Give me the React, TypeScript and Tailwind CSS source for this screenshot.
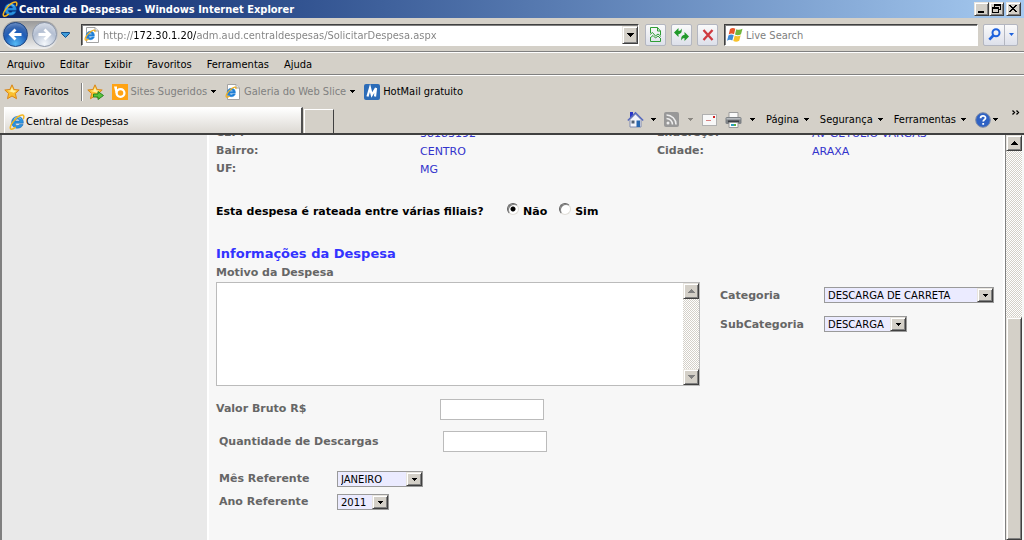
import type { ReactNode } from 'react'

const menu = ['Arquivo', 'Editar', 'Exibir', 'Favoritos', 'Ferramentas', 'Ajuda']

const dados = [
    ['CEP:', '38183192', 'Endereço:', 'AV GETULIO VARGAS'],
    ['Bairro:', 'CENTRO', 'Cidade:', 'ARAXA'],
    ['UF:', 'MG', '', ''],
]

const raised = 'bg-[#d4d0c8] border border-t-[#e9e6e0] border-l-[#e9e6e0] border-r-[#404040] border-b-[#404040] shadow-[inset_1px_1px_0_#fff,inset_-1px_-1px_0_#808080]'
const dither = 'bg-[repeating-conic-gradient(#fff_0_25%,#d4d0c8_0_50%)] bg-size-[2px_2px]'

function Seta({ className = 'text-black' }: { className?: string }) {
    return (
        <svg width="5" height="3" viewBox="0 0 5 3" shapeRendering="crispEdges" className={`mx-px shrink-0 ${className}`}>
            <path d="M0 0h5v1H4v1H3v1H2V2H1V1H0z" fill="currentColor" />
        </svg>
    )
}

function SetaRolagem({ up, className = 'text-black' }: { up?: boolean; className?: string }) {
    return (
        <svg width="7" height="4" viewBox="0 0 7 4" shapeRendering="crispEdges" className={className}>
            <path d={up ? 'M3 0h1v1h1v1h1v1h1v1H0V3h1V2h1V1h1z' : 'M0 0h7v1H6v1H5v1H4v1H3V3H2V2H1V1H0z'} fill="currentColor" />
        </svg>
    )
}

function IconeIE() {
    return (
        <svg width="16" height="16" viewBox="0 0 16 16" className="shrink-0">
            <path d="M8.400 2.400a5.800 5.800 0 0 0-5.800 5.800c0 3.500 2.500 6 5.900 6 2.700 0 4.800-1.400 5.600-3.700h-3.500c-.5.7-1.200 1-2.100 1-1.400 0-2.300-.9-2.400-2.300h8.200c.4-4.200-2.200-6.800-5.900-6.800zM6.100 7c.3-1.200 1.100-1.900 2.300-1.900s2.100.7 2.300 1.900z" fill="#2a93e0" stroke="#0f5fb0" strokeWidth=".5" />
            <path d="M5 5.200c.9-1.200 2-1.700 3.400-1.700 1.600 0 2.800.6 3.600 1.700" fill="none" stroke="#8fd4fa" strokeWidth=".9" />
            <path d="M14.500 4.600c.6-2 .5-3.600-.9-3.700C11.200.7 6.900 4 4 7.900 1.500 11.200.5 14.300 1.900 15c1 .5 2.800-.4 4.300-1.600" fill="none" stroke="#f3b61f" strokeWidth="1.500" strokeLinecap="round" />
        </svg>
    )
}

function PaginaIE() {
    return (
        <svg width="16" height="16" viewBox="0 0 16 16" className="shrink-0">
            <path d="M2.500.5h8.500l3.500 3.500v11.500h-12z" fill="#fff" stroke="#a3a3a3" />
            <path d="M11 .5V4h3.500" fill="#e8e8e8" stroke="#a3a3a3" />
            <path d="M6.300 4.300a4 4 0 0 0-4.100 4.200c0 2.500 1.700 4.200 4.200 4.200 1.900 0 3.400-1 3.900-2.600H7.900c-.3.4-.8.6-1.400.6-1 0-1.600-.6-1.700-1.500h5.600c.3-3-1.400-4.900-4.100-4.900zM4.800 7.500c.2-.8.7-1.200 1.500-1.200s1.400.4 1.500 1.200z" fill="#1f7fd6" stroke="#1f7fd6" strokeWidth=".5" />
            <path d="M10.800 5.200c.4-1.400 0-2.100-1-2C7.700 3.400 3.500 6.800 1.800 9.900c-1.100 2-.9 3.400.3 3.300.8 0 1.800-.5 2.600-1.100" fill="none" stroke="#f0b020" strokeWidth="1.200" />
        </svg>
    )
}

function Estrela({ add = false }: { add?: boolean }) {
    return (
        <svg width="17" height="16" viewBox="0 0 17 16" className="shrink-0">
            <path d="M8 .8l2.100 4.700 5.100.5-3.800 3.500 1.100 5.200L8 12l-4.500 2.700 1.100-5.200L.8 6l5.100-.5z" fill="#fbc02f" stroke="#d9861a" strokeWidth="1" strokeLinejoin="round" />
            <path d="M8 3l1.200 3.300 3.300.4-2.700 2L8 8.300 3.500 6.800l3-.4z" fill="#fff0a0" />
            {add && <path d="M6.500 10h4.500V7.500l5.500 4-5.500 4V13H6.500z" fill="#59c43c" stroke="#1d7f1b" strokeWidth=".9" />}
        </svg>
    )
}

function BotaoBarra({ label, children }: { label: string; children: ReactNode }) {
    return (
        <button aria-label={label} className="flex h-[22px] w-[21px] shrink-0 items-center justify-center rounded-xs border border-[#b3b6c0] bg-linear-to-b from-[#fafafa] to-[#dde0ea]">
            {children}
        </button>
    )
}

function BotaoJanela({ label, children }: { label: string; children: ReactNode }) {
    return (
        <button aria-label={label} className={`flex h-[14px] w-[15px] items-center justify-center ${raised}`}>
            <svg width="11" height="10" viewBox="0 0 11 10" shapeRendering="crispEdges" className="shrink-0">{children}</svg>
        </button>
    )
}

function Combo({ id, value, className }: { id: string; value: string; className: string }) {
    return (
        <div className={`relative h-4 ${className}`}>
            <select id={id} defaultValue={value} className="block h-4 w-full appearance-none border border-[#9a9a9a] bg-[#ebebff] pt-px pl-[3px] text-[10px] leading-[13px] font-normal text-black">
                <option>{value}</option>
            </select>
            <span className={`pointer-events-none absolute top-px right-px flex h-[14px] w-4 items-center justify-center ${raised}`}>
                <Seta />
            </span>
        </div>
    )
}

function Radio({ label, checked }: { label: string; checked?: boolean }) {
    return (
        <label className="flex items-center gap-1">
            <input
                type="radio"
                name="rateada"
                defaultChecked={checked}
                className="mb-[6px] size-3 appearance-none rounded-full border border-t-[#606060] border-l-[#606060] border-r-[#e0ded8] border-b-[#e0ded8] bg-white shadow-[inset_1px_1px_0_#808080] checked:bg-[radial-gradient(circle,#000_2px,#fff_3px)]"
            />
            {label}
        </label>
    )
}

function Cabecalho() {
    return (
        <header className="shrink-0 bg-[#d4d0c8]">
            {/* barra de titulo */}
            <div className="flex h-[18px] items-center bg-linear-to-r from-[#0a246a] to-[#a6caf0] pr-[3px] pl-[2px]">
                <IconeIE />
                <h1 className="ml-px flex-1 pt-px text-[11px] font-bold text-white">Central de Despesas - Windows Internet Explorer</h1>
                <BotaoJanela label="Minimizar"><path d="M2 7h6v2H2z" /></BotaoJanela>
                <BotaoJanela label="Restaurar"><path d="M3 0h7v6H8V5h1V2H4v1H3zM1 3h7v6H1zm1 2v3h5V5z" fillRule="evenodd" /></BotaoJanela>
                <span className="w-[2px]" />
                <BotaoJanela label="Fechar"><path d="M1 1h2v1h1v1h2V2h1V1h2v1H8v1H7v1H6v1h1v1h1v1h1v1H7V7H6V6H4v1H3v1H1V7h1V6h1V5h1V4H3V3H2V2H1z" /></BotaoJanela>
            </div>

            {/* navegacao */}
            <div className="flex h-[34px] items-center border-b border-[#808080] pr-[6px] pl-[2px]">
                <div className="flex h-7 w-[56px] shrink-0 items-center justify-between rounded-full bg-linear-to-b from-[#9a9a9a] to-[#efefef] px-px">
                    <button aria-label="Voltar" className="flex size-[25px] items-center justify-center rounded-full border border-[#1c4380] bg-[radial-gradient(circle_at_50%_90%,#55b9f5,#1e5cb8_50%,#3a68b0_70%,#8aa6d4)]">
                        <svg width="17" height="17" viewBox="0 0 17 17"><path d="M14.500 8.500H4M8.500 3.500l-5 5 5 5" fill="none" stroke="#fff" strokeWidth="2.800" /></svg>
                    </button>
                    <button aria-label="Avançar" className="flex size-[25px] items-center justify-center rounded-full border border-[#8d98ab] bg-[radial-gradient(circle_at_50%_90%,#f4f8fc,#b4bfd2_55%,#e4e8ef)]">
                        <svg width="17" height="17" viewBox="0 0 17 17"><path d="M2.500 8.500H13M8.500 3.500l5 5-5 5" fill="none" stroke="#fff" strokeWidth="2.800" /></svg>
                    </button>
                </div>
                <button aria-label="Páginas recentes" className="mr-[11px] ml-[3px]">
                    <svg width="9" height="6" viewBox="0 0 9 6"><path d="M.5.5h8v1l-4 4-4-4z" fill="#3f9bd8" stroke="#134f8c" /></svg>
                </button>
                <div className="flex h-[22px] flex-1 items-center border border-t-[#404040] border-l-[#404040] border-r-white border-b-white bg-white pl-[2px] shadow-[inset_1px_1px_0_#808080]">
                    <PaginaIE />
                    <input
                        aria-label="Endereço"
                        defaultValue="http://172.30.1.20/adm.aud.centraldespesas/SolicitarDespesa.aspx"
                        className="ml-[3px] h-[18px] min-w-0 flex-1 bg-[linear-gradient(90deg,#808080_31px,#000_31px,#000_93px,#808080_93px)] bg-clip-text pt-[2px] text-[11px] text-transparent outline-none"
                    />
                    <button aria-label="Histórico" className={`flex h-[18px] w-4 items-center justify-center ${raised}`}><SetaRolagem /></button>
                </div>
                <div className="mx-[6px] flex gap-[5px]">
                    <BotaoBarra label="Modo de compatibilidade">
                        <svg width="13" height="15" viewBox="0 0 13 15" fill="none" stroke="#2f9e35">
                            <path d="M1.500 6V.5h7L11.500 4v4M8.500.5V4h3M1.500 10.500v4h10v-3" />
                            <path d="M1 7.500l2.500-2 3 3.500 2.500-2 3 2.500M1 11l3-2.500 2.500 2.500L9 9l3 3" />
                        </svg>
                    </BotaoBarra>
                    <BotaoBarra label="Atualizar">
                        <svg width="15" height="13" viewBox="0 0 15 13" fill="#219a2b">
                            <path d="M0 4.500L4.500 0v3c1.500 0 2.500-.8 3-2.500.8 3-.2 5.500-3 5.500v3z" />
                            <path d="M15 8.500L10.500 13v-3c-1.500 0-2.500.8-3 2.500-.8-3 .2-5.500 3-5.500V4z" />
                        </svg>
                    </BotaoBarra>
                    <BotaoBarra label="Parar">
                        <svg width="12" height="12" viewBox="0 0 12 12"><path d="M1.500 1l9 10M10.500 1l-9 10" stroke="#cf3a3f" strokeWidth="2.300" /></svg>
                    </BotaoBarra>
                </div>
                <div className="flex h-[22px] w-[254px] items-center border border-t-[#404040] border-l-[#404040] border-r-white border-b-white bg-white pl-[2px] shadow-[inset_1px_1px_0_#808080]">
                    <svg width="17" height="16" viewBox="0 0 17 16" className="shrink-0">
                        <path d="M3 2c2-1.200 3.700-1.200 5.300-.2L7 7.200C5.300 6.200 3.600 6.300 1.700 7.400z" fill="#e8562a" />
                        <path d="M9.300 2.200c2 1 3.900.8 6.200-.4L14 7.300c-2.200 1.200-4 1.200-6 .2z" fill="#72b53a" />
                        <path d="M1.400 8.500c1.900-1.100 3.600-1.200 5.300-.2l-1.400 5.200c-1.700-1-3.400-.9-5.200.2z" fill="#3e8bd8" />
                        <path d="M7.700 8.600c2 1 3.900.9 6-.3l-1.500 5.500c-2.100 1.200-3.900 1.200-5.900.2z" fill="#f8c22b" />
                    </svg>
                    <input aria-label="Pesquisar" placeholder="Live Search" className="ml-[2px] h-[18px] min-w-0 flex-1 pt-[2px] text-[11px] outline-none placeholder:text-[#808080]" />
                </div>
                <div className="ml-[5px] flex h-[22px] w-[35px] shrink-0 rounded-xs border border-[#b3b6c0] bg-linear-to-b from-[#fafafa] to-[#dde0ea]">
                    <button aria-label="Buscar" className="flex w-[21px] items-center justify-center border-r border-[#b3b6c0]">
                        <svg width="13" height="13" viewBox="0 0 13 13" fill="none" stroke="#1f62dc"><circle cx="8" cy="4.800" r="3.500" strokeWidth="2" /><path d="M5.300 7.500l-4 4.200" strokeWidth="2.600" /></svg>
                    </button>
                    <button aria-label="Opções de busca" className="flex flex-1 items-center justify-center">
                        <svg width="5" height="3" viewBox="0 0 5 3"><path d="M0 0h5L2.500 3z" fill="#1f62dc" /></svg>
                    </button>
                </div>
            </div>

            <nav className="flex h-[23px] items-center gap-[15px] border-t border-b border-t-white border-b-[#808080] pt-[2px] pl-[7px]">
                {menu.map((m) => <button key={m}>{m}</button>)}
            </nav>

            {/* favoritos */}
            <div className="flex h-[32px] items-center border-t border-white pl-1">
                <button className="flex items-center gap-[3px]"><Estrela />Favoritos</button>
                <span className="mr-1 ml-3 h-[18px] w-[2px] border-l border-[#808080] bg-white" />
                <button aria-label="Adicionar aos favoritos"><Estrela add /></button>
                <a href="#" className="ml-2 flex items-center gap-[3px] text-[#808080]">
                    <svg width="16" height="16" viewBox="0 0 16 16"><path d="M0 0h16v16H0z" fill="#ffa314" /><circle cx="8.500" cy="9" r="3.900" fill="none" stroke="#fff" strokeWidth="2.300" /><path d="M2 2.500h3V9H3.600z" fill="#fff" /></svg>
                    Sites Sugeridos
                    <Seta />
                </a>
                <a href="#" className="ml-2 flex items-center gap-[3px] text-[#808080]">
                    <PaginaIE />
                    Galeria do Web Slice
                    <Seta />
                </a>
                <a href="#" className="ml-2 flex items-center gap-[3px]">
                    <svg width="16" height="16" viewBox="0 0 16 16"><rect width="16" height="16" rx="2" fill="#2c6cb8" /><path d="M3.500 12.500L6 4l1.800 7L12 4l-1 8.500" fill="none" stroke="#fff" strokeWidth="2.200" /></svg>
                    HotMail gratuito
                </a>
            </div>

            {/* abas e comandos */}
            <div className="flex h-[28px] items-end justify-between border-b-2 border-[#404040] pr-1 pl-1">
                <div className="flex items-end">
                    <button className="flex h-[26px] w-[299px] items-center gap-px border-t border-l border-r-2 border-t-white border-l-white border-r-[#505050] bg-linear-to-b from-white to-[#dcd9d3] pt-[2px] pl-1">
                        <IconeIE />Central de Despesas
                    </button>
                    <button aria-label="Nova guia" className="ml-px h-6 w-[30px] border-t border-l border-r border-t-white border-l-white border-r-[#404040]" />
                </div>
                <div className="flex h-7 items-center pt-px">
                    <button aria-label="Página inicial" className="mr-[6px]">
                        <svg width="17" height="17" viewBox="0 0 17 17">
                            <path d="M3 1h3v5H3z" fill="#2a35c8" />
                            <path d="M3 8.500L8.500 3 14 8.500v7.500H3z" fill="#f3f4fa" stroke="#7f8bb0" />
                            <path d="M.8 9.500L8.500 1.800l7.700 7.700" fill="none" stroke="#5468bd" strokeWidth="1.400" />
                            <path d="M9.500 9.500h3.500V16H9.500z" fill="#2767b0" /><path d="M4.500 9.500h3v3h-3z" fill="#4f6074" />
                        </svg>
                    </button>
                    <Seta />
                    <button aria-label="Feeds" className="mr-2 ml-[7px]">
                        <svg width="15" height="15" viewBox="0 0 15 15"><rect width="15" height="15" rx="2" fill="#989898" /><circle cx="4" cy="11" r="1.500" fill="#eee" /><path d="M2.500 6.500a6 6 0 0 1 6 6M2.500 3a9.500 9.500 0 0 1 9.500 9.500" fill="none" stroke="#eee" strokeWidth="1.600" /></svg>
                    </button>
                    <Seta className="text-[#8b8882]" />
                    <button aria-label="Ler email" className="mr-2 ml-2">
                        <svg width="15" height="12" viewBox="0 0 15 12"><rect x=".5" y=".5" width="14" height="11" fill="#f8f8f8" stroke="#b0b0b0" /><path d="M11 2h2v2h-2z" fill="#d02020" /><path d="M4 6.500h5" stroke="#d68080" /></svg>
                    </button>
                    <button aria-label="Imprimir" className="mr-[7px]">
                        <svg width="17" height="16" viewBox="0 0 17 16"><path d="M4 .5h9V6H4z" fill="#fafafa" stroke="#9c9c9c" /><rect x=".5" y="5" width="16" height="7" rx="1.500" fill="#7e8286" /><path d="M1.500 6h14v1.500h-14z" fill="#b9bcc0" /><path d="M3 8.500h11v2H3z" fill="#3c3f44" /><path d="M4 10.500h9v5H4z" fill="#fff" stroke="#999" /><path d="M6 12h3v2H6z" fill="#28a0c0" /><path d="M9 12h2v2H9z" fill="#58b040" /></svg>
                    </button>
                    <Seta />
                    <button className="ml-[10px] flex items-center gap-1">Página <Seta /></button>
                    <button className="ml-[10px] flex items-center gap-1">Segurança <Seta /></button>
                    <button className="ml-[10px] flex items-center gap-1">Ferramentas <Seta /></button>
                    <button aria-label="Ajuda" className="ml-2 flex items-center gap-px">
                        <svg width="16" height="16" viewBox="0 0 16 16"><circle cx="8" cy="8" r="7.300" fill="#2f62c4" stroke="#7d8ba8" /><path d="M5.600 6.200c0-3 4.900-3 4.900-.3 0 1.700-2.300 1.700-2.300 3.700M8.200 11v1.800" fill="none" stroke="#fff" strokeWidth="1.800" /></svg>
                        <Seta />
                    </button>
                    <button aria-label="Mais" className="mb-[14px] ml-[13px]">
                        <svg width="8" height="5" viewBox="0 0 8 5" fill="none" stroke="#000" strokeWidth="1.300"><path d="M.5.500l2 2-2 2M4.500.500l2 2-2 2" /></svg>
                    </button>
                </div>
            </div>
        </header>
    )
}

export default function App() {
    return (
        <div className="flex h-screen flex-col overflow-hidden font-['DejaVu_Sans_Condensed','DejaVu_Sans',sans-serif] text-[11px] leading-4 text-black [font-stretch:condensed]">
            <Cabecalho />

            <div className="flex min-h-0 flex-1 border-l-2 border-[#808080] bg-[#f7f7f7] font-['DejaVu_Sans',Verdana,sans-serif] [font-stretch:normal]">
                <aside className="w-[205px] shrink-0 bg-[#e9e9e9]" />

                <main className="min-w-0 flex-1 overflow-hidden border-x-2 border-white pl-[7px] leading-[18px] font-bold text-[#666]">
                    {/* pagina rolada, a primeira linha fica cortada */}
                    <dl className="-mt-[11px] grid auto-rows-[18px] grid-cols-[204px_237px_155px_1fr] items-center">
                        {dados.flat().map((d, i) => i % 2 === 0
                            ? <dt key={i}>{d}</dt>
                            : <dd key={i} className="pt-px font-normal text-[#3333cc]">{d}</dd>)}
                    </dl>

                    <fieldset className="mt-[25px] flex h-[18px] items-center text-black">
                        <legend className="float-left w-[291px]">Esta despesa é rateada entre várias filiais?</legend>
                        <Radio label="Não" checked />
                        <span className="w-3" />
                        <Radio label="Sim" />
                    </fieldset>

                    <h2 className="mt-6 text-[13px] text-[#3333ff]">Informações da Despesa</h2>
                    <label htmlFor="motivo" className="block h-[19px] leading-5">Motivo da Despesa</label>

                    <div className="flex">
                        <div className="flex h-[104px] w-[484px] shrink-0 border border-[#bbb] bg-white">
                            <textarea id="motivo" className="min-w-0 flex-1 resize-none overflow-hidden p-1 font-normal text-black outline-none" />
                            <div className={`flex w-4 flex-col justify-between ${dither}`}>
                                <button aria-label="Rolar para cima" className={`flex h-4 items-center justify-center ${raised}`}><SetaRolagem up className="text-[#808080]" /></button>
                                <button aria-label="Rolar para baixo" className={`flex h-4 items-center justify-center ${raised}`}><SetaRolagem className="text-[#808080]" /></button>
                            </div>
                        </div>
                        <div className="ml-5 flex flex-col gap-[13px] pt-[5px]">
                            <div className="flex h-4"><label htmlFor="categoria" className="w-[104px]">Categoria</label><Combo id="categoria" value="DESCARGA DE CARRETA" className="w-[170px]" /></div>
                            <div className="flex h-4"><label htmlFor="subcategoria" className="w-[104px]">SubCategoria</label><Combo id="subcategoria" value="DESCARGA" className="w-[83px]" /></div>
                        </div>
                    </div>

                    <div className="mt-[13px] flex">
                        <label htmlFor="valor" className="w-[224px] leading-5">Valor Bruto R$</label>
                        <input id="valor" className="h-[21px] w-[104px] border border-[#bbb] bg-white px-1 font-normal" />
                    </div>
                    <div className="mt-[11px] flex h-[21px] pl-[3px]">
                        <label htmlFor="quantidade" className="w-[224px] leading-[22px]">Quantidade de Descargas</label>
                        <input id="quantidade" className="h-[21px] w-[104px] border border-[#bbb] bg-white px-1 font-normal" />
                    </div>
                    <div className="mt-[19px] flex flex-col gap-[7px] pl-[3px]">
                        <div className="flex h-4"><label htmlFor="mes" className="w-[118px] leading-4">Mês Referente</label><Combo id="mes" value="JANEIRO" className="w-[86px]" /></div>
                        <div className="flex h-4"><label htmlFor="ano" className="w-[118px] leading-4">Ano Referente</label><Combo id="ano" value="2011" className="w-[52px]" /></div>
                    </div>
                </main>

                {/* barra de rolagem */}
                <div className={`mr-[2px] flex w-[17px] shrink-0 flex-col border-l border-[#808080] ${dither}`}>
                    <button aria-label="Subir" className={`flex h-4 items-center justify-center ${raised}`}><SetaRolagem up /></button>
                    <div className="flex-[9]" />
                    <div className={`flex-[12] ${raised}`} />
                </div>
            </div>
        </div>
    )
}
